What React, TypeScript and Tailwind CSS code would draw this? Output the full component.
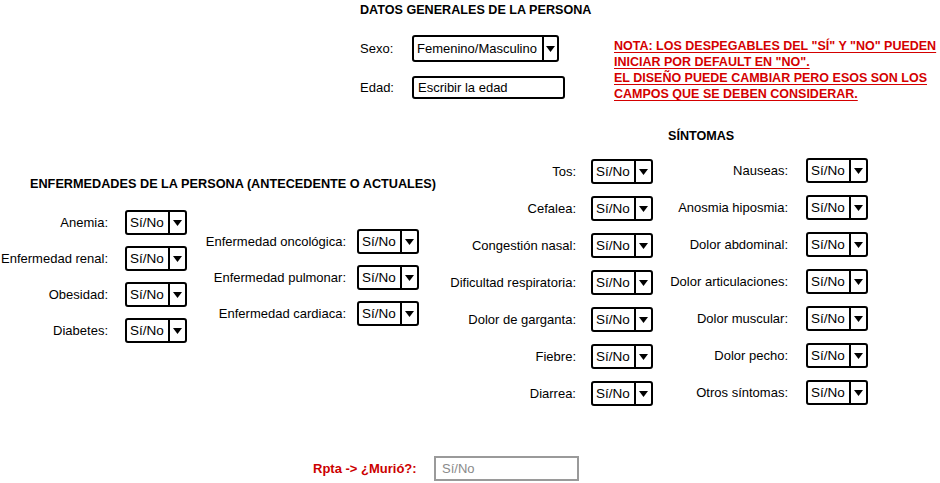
const Caret = () => (
  <svg width="9" height="6" viewBox="0 0 9 6" className="block">
    <path d="M0 0 L9 0 L4.5 6 Z" fill="#000" />
  </svg>
);

const SiNo = () => (
  <div className="flex h-[25px] w-[62px] shrink-0 items-stretch rounded-[3px] border-2 border-black bg-white">
    <div className="flex w-[41px] items-center pl-[3px] text-[13.5px] leading-none">Sí/No</div>
    <div className="flex flex-1 items-center justify-center border-l-2 border-black">
      <Caret />
    </div>
  </div>
);

type RowProps = { label: string; labelW: string; gap: string };

const Row = ({ label, labelW, gap }: RowProps) => (
  <div className={`flex items-center ${gap}`}>
    <div className={`${labelW} whitespace-nowrap text-right`}>{label}</div>
    <SiNo />
  </div>
);

const antecedentesA = ["Anemia:", "Enfermedad renal:", "Obesidad:", "Diabetes:"];
const antecedentesB = ["Enfermedad oncológica:", "Enfermedad pulmonar:", "Enfermedad cardiaca:"];
const sintomasA = [
  "Tos:",
  "Cefalea:",
  "Congestión nasal:",
  "Dificultad respiratoria:",
  "Dolor de garganta:",
  "Fiebre:",
  "Diarrea:",
];
const sintomasB = [
  "Nauseas:",
  "Anosmia hiposmia:",
  "Dolor abdominal:",
  "Dolor articulaciones:",
  "Dolor muscular:",
  "Dolor pecho:",
  "Otros síntomas:",
];

export default function App() {
  return (
    <div className="h-[483px] w-[940px] overflow-hidden bg-white font-['Liberation_Sans',Arial,sans-serif] text-[13px] text-black">
      {/* datos generales + nota */}
      <div className="flex h-[110px] pl-[360px] pt-[2px]">
        <div className="w-[254px]">
          <div className="text-[12.6px] font-bold leading-[16px]">DATOS GENERALES DE LA PERSONA</div>
          <div className="mt-[17px] flex items-center">
            <div className="w-[52px]">Sexo:</div>
            <div className="flex h-[27px] w-[147px] items-stretch rounded-[3px] border-2 border-black">
              <div className="flex w-[128px] items-center pl-[3px]">Femenino/Masculino</div>
              <div className="flex flex-1 items-center justify-center border-l-2 border-black">
                <Caret />
              </div>
            </div>
          </div>
          <div className="mt-[14px] flex items-center">
            <div className="w-[52px]">Edad:</div>
            <div className="flex h-[23px] w-[153px] items-center rounded-[3px] border-2 border-black pl-[4px]">
              Escribir la edad
            </div>
          </div>
        </div>
        <div className="pt-[36px] text-[12.5px] font-bold leading-[16px] text-[#d40000] underline underline-offset-2">
          <div>NOTA: LOS DESPEGABLES DEL "SÍ" Y "NO" PUEDEN</div>
          <div>INICIAR POR DEFAULT EN "NO".</div>
          <div>EL DISEÑO PUEDE CAMBIAR PERO ESOS SON LOS</div>
          <div>CAMPOS QUE SE DEBEN CONSIDERAR.</div>
        </div>
      </div>

      {/* enfermedades + síntomas */}
      <div className="flex">
        <div className="w-[440px] pt-[66px]">
          <div className="pl-[30px] text-[12.7px] font-bold leading-[16px]">
            ENFERMEDADES DE LA PERSONA (ANTECEDENTE O ACTUALES)
          </div>
          <div className="flex">
            <div className="mt-[18px] flex w-[187px] flex-col gap-[11px]">
              {antecedentesA.map((l) => (
                <Row key={l} label={l} labelW="w-[108px]" gap="gap-[17px]" />
              ))}
            </div>
            <div className="mt-[37px] flex flex-col gap-[11px]">
              {antecedentesB.map((l) => (
                <Row key={l} label={l} labelW="w-[159px]" gap="gap-[11px]" />
              ))}
            </div>
          </div>
        </div>

        <div className="w-[500px] pt-[18px]">
          <div className="pl-[228px] text-[12.6px] font-bold leading-[16px]">SÍNTOMAS</div>
          <div className="mt-[14px] flex">
            <div className="mt-[1px] flex w-[213px] flex-col gap-[12px]">
              {sintomasA.map((l) => (
                <Row key={l} label={l} labelW="w-[136px]" gap="gap-[15px]" />
              ))}
            </div>
            <div className="flex flex-col gap-[12px]">
              {sintomasB.map((l) => (
                <Row key={l} label={l} labelW="w-[135px]" gap="gap-[18px]" />
              ))}
            </div>
          </div>
        </div>
      </div>

      {/* respuesta */}
      <div className="mt-[50px] flex items-center pl-[313px]">
        <div className="w-[121px] font-bold text-[#cc0000]">Rpta -&gt; ¿Murió?:</div>
        <div className="flex h-[25px] w-[145px] items-center border-2 border-[#9a9a9a] pl-[6px] text-[#8a8a8a]">
          Sí/No
        </div>
      </div>
    </div>
  );
}
